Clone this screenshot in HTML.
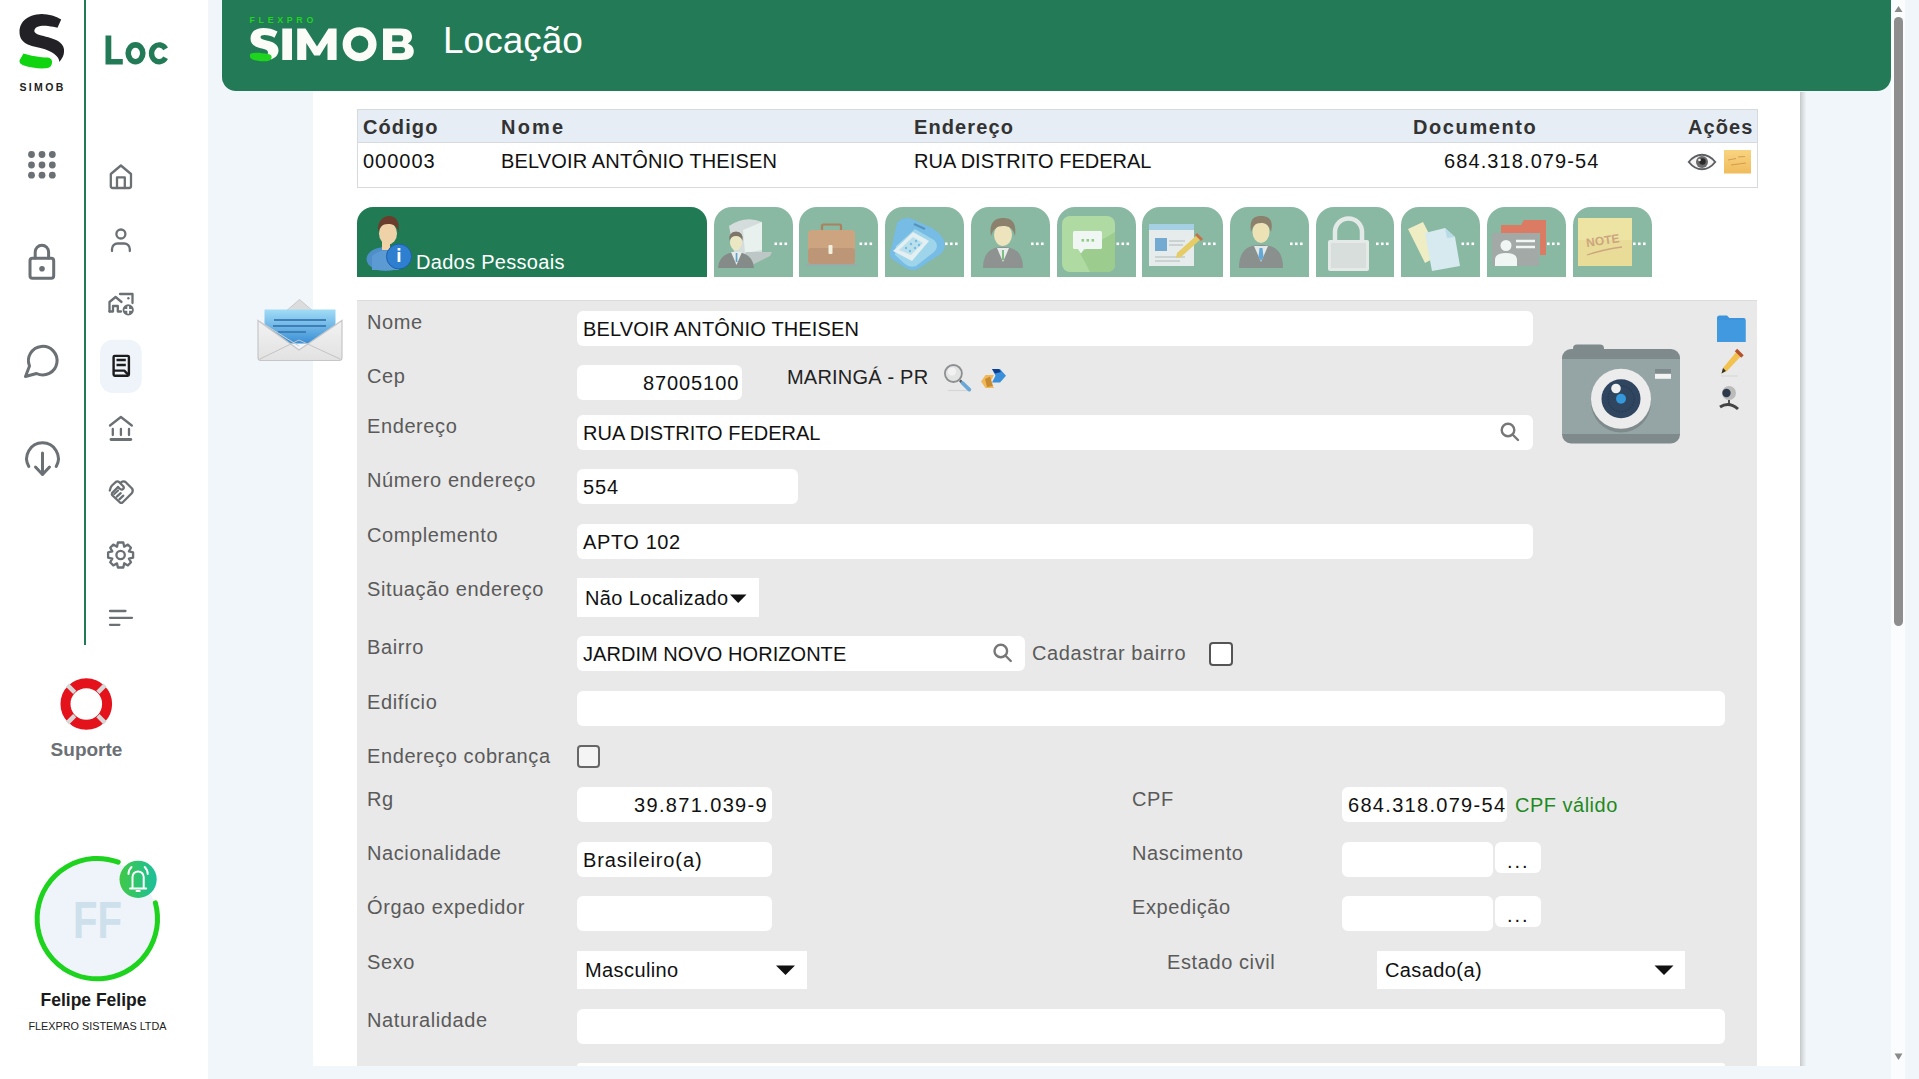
<!DOCTYPE html>
<html><head><meta charset="utf-8">
<style>
*{box-sizing:border-box;margin:0;padding:0}
html,body{width:1919px;height:1079px;overflow:hidden;background:#f1f6fb;font-family:"Liberation Sans",sans-serif}
.a{position:absolute}
#sb1{left:0;top:0;width:84px;height:1079px;background:#fff}
#sb2{left:84px;top:0;width:124px;height:1079px;background:#fff}
#gline{left:84px;top:0;width:2px;height:645px;background:#237a56}
#hdr{left:222px;top:0;width:1669px;height:91px;background:#237a56;border-radius:0 0 14px 14px}
#panel{left:313px;top:91px;width:1487px;height:975px;background:#fff}
#pshadow{left:1800px;top:92px;width:6px;height:974px;background:linear-gradient(90deg,#c4c9cc,#dfe3e6 60%,#eef2f5)}
#sbar{left:1891px;top:0;width:14px;height:1079px;background:#fbfcfd}
#thumb{left:1894px;top:17px;width:9px;height:609px;background:#8e8e8e;border-radius:5px}
.lbl{color:#5a5a5a;font-size:20px;letter-spacing:0.6px;white-space:nowrap}
.inp{background:#fff;border-radius:6px}
.txt{color:#111;font-size:20px;white-space:nowrap}
.th{font-weight:bold;font-size:20px;color:#333;letter-spacing:1.1px;white-space:nowrap}
.td{font-size:20px;color:#111;white-space:nowrap}
.tab{top:207px;height:70px;width:79px;background:#89b8a3;border-radius:18px 18px 0 0}
.dots{top:242px;width:14px;height:3px;background:
 radial-gradient(circle,#fff 1.3px,transparent 1.5px) 0 0/5px 3px repeat-x}
</style></head><body>
<div id="sb1" class="a"></div>
<div id="sb2" class="a"></div>
<div id="gline" class="a"></div>
<div id="hdr" class="a"></div>
<div id="panel" class="a"></div>
<div id="pshadow" class="a"></div>
<div id="sbar" class="a"></div>
<div id="thumb" class="a"></div>
<svg class="a" style="left:1891px;top:0" width="14" height="1079" viewBox="1891 0 14 1079"><path d="M1894.5 12 L1898.5 6 L1902.5 12 Z" fill="#8a8a8a"/><path d="M1894.5 1053.5 L1898.5 1060 L1902.5 1053.5 Z" fill="#8a8a8a"/></svg>

<!-- sidebar svg -->
<svg class="a" style="left:0;top:0" width="208" height="1079" viewBox="0 0 208 1079">
 <!-- S logo -->
 <path fill="#222226" d="M61.2 19.5 C56 16 49 14 41.7 13.9 C35 14 28 16 23.2 21.3 C20 25 19.5 29.7 19.5 31 C19.5 37 21 41 27.8 44.5 C33 47 39 47.3 45 49.2 C50 51 54 53 56.5 56 C58.5 58 59.3 60 59.3 62 C62 59 64 55 64 52 C64.5 48 63 45 60 42.5 C56 39 50 38 43.6 36 C39 35 36 34 35 32.5 C33.5 30.5 35 28 37 27 C40 25.5 45 25.5 48 26 C52 26.5 55 27 57.5 27.8 Z"/>
 <path fill="#0fd40f" d="M23.5 53.5 C30 55.5 40 57.5 48 57.5 C51 58 52.5 60 52 63 C51.5 66 50 68 46 68.3 C38 68.8 30 67.5 24 65.5 C20 64 19 62 19.7 60 Z"/>
 <text x="42.6" y="91" text-anchor="middle" font-family="Liberation Sans" font-weight="bold" font-size="10.5" letter-spacing="2.4" fill="#222">SIMOB</text>
 <!-- grid -->
 <g fill="#6b7075">
  <circle cx="31.5" cy="154.5" r="3.4"/><circle cx="42" cy="154.5" r="3.4"/><circle cx="52.3" cy="154.5" r="3.4"/>
  <circle cx="31.5" cy="165" r="3.4"/><circle cx="42" cy="165" r="3.4"/><circle cx="52.3" cy="165" r="3.4"/>
  <circle cx="31.5" cy="175.2" r="3.4"/><circle cx="42" cy="175.2" r="3.4"/><circle cx="52.3" cy="175.2" r="3.4"/>
 </g>
 <g fill="none" stroke="#6b7075" stroke-width="3" stroke-linecap="round" stroke-linejoin="round">
  <!-- lock -->
  <rect x="30" y="258.3" width="23.7" height="20" rx="2.5"/>
  <path d="M35.2 258 V252 A6.7 6.7 0 0 1 48.6 252 V258"/>
 </g><circle cx="42" cy="268.7" r="2.8" fill="#6b7075"/><g fill="none" stroke="#6b7075" stroke-width="3" stroke-linecap="round" stroke-linejoin="round">
  <!-- chat -->
  <path d="M29.5 366 A14.3 14.3 0 1 1 36.5 373.5 L25.5 376.5 Z"/>
  <!-- download -->
  <path d="M28.8 466.5 A15.8 15.8 0 1 1 56.2 466.5"/>
  <path d="M42.5 453 V474.5 M35.5 467 L42.5 474.5 L49.5 467"/>
 </g>
 <g fill="none" stroke="#6b7075" stroke-width="2.3" stroke-linecap="round" stroke-linejoin="round">
  <!-- home -->
  <path d="M110.8 174 L120.9 165.5 L131 174 V186 A2 2 0 0 1 129 188 H112.8 A2 2 0 0 1 110.8 186 Z"/>
  <path d="M117 188 V177.3 H124.8 V188"/>
  <!-- user -->
  <circle cx="120.9" cy="234" r="4.5"/>
  <path d="M112 251 V249 A5.5 5.5 0 0 1 117.5 243.5 H124.3 A5.5 5.5 0 0 1 129.8 249 V251"/>
  <!-- house add -->
  <path d="M109.5 311.5 V302 L115.6 297 L121.5 302" />
  <path d="M109.5 311.5 H113 V306 H117.8 V311.5 H121"/>
  <path d="M120 294 H132.5 V303"/>
  <!-- bank -->
  <path d="M110 425.5 L120.9 417 L131.8 425.5"/>
  <path d="M112.8 429 V435 M120.9 429 V435 M129 429 V435"/>
  <path d="M111 439.5 H130.8" stroke-width="2.8"/>
  <!-- gear -->
  <circle cx="120.6" cy="555" r="4.2"/>
  <!-- menu -->
  <path d="M110 611 H125.5 M110 617.8 H132 M110 624.8 H119.4"/>
 </g>
 <circle cx="128.4" cy="298.2" r="1.2" fill="#6b7075"/>
 <circle cx="128.2" cy="309.9" r="5.6" fill="#6b7075"/>
 <path d="M128.2 306.9 V312.9 M125.2 309.9 H131.2" stroke="#fff" stroke-width="1.8" stroke-linecap="round"/>
 <!-- gear teeth -->
 <path fill="none" stroke="#6b7075" stroke-width="2.3" stroke-linejoin="round" d="M117.9 542.5 L123.3 542.5 L124.2 546.7 L127.9 544.6 L131 547.7 L128.9 551.4 L133.1 552.3 L133.1 557.7 L128.9 558.6 L131 562.3 L127.9 565.4 L124.2 563.3 L123.3 567.5 L117.9 567.5 L117 563.3 L113.3 565.4 L110.2 562.3 L112.3 558.6 L108.1 557.7 L108.1 552.3 L112.3 551.4 L110.2 547.7 L113.3 544.6 L117 546.7 Z"/>
 <!-- handshake -->
 <g fill="none" stroke="#6b7075" stroke-width="2.3" stroke-linejoin="round" stroke-linecap="round">
  <path d="M109.8 490.5 L110.7 487.5 Q111.5 486 112.5 485 L116 481.8 Q117.5 480.8 119 482 L123.5 486.5 Q124.5 488.5 122.5 489.5 Q121 490 119.5 488.5 L118 487"/>
  <path d="M118 487 L112 493 Q111.5 494.5 112.5 495.5 L120 502.5 Q121.3 503.3 122.5 502.5 L132 493 Q133.5 490.5 132 488.5 L125.5 482 Q123.5 480.5 121 482.5"/>
  <path d="M114.2 494 L118 490.5 M116.8 496.7 L120.7 493.2 M119.4 499.3 L123.3 495.7"/>
 </g>
 <!-- active doc -->
 <rect x="100" y="339.7" width="41.7" height="53.3" rx="13" fill="#eef4fa"/>
 <g fill="none" stroke="#1c1c1c" stroke-width="2.4" stroke-linejoin="round">
  <rect x="113.6" y="355.9" width="15.3" height="19.9" rx="1.2"/>
  <path d="M116.5 360 H125.8 M116.5 365 H125.8 M114 370.6 H124.3 L128.4 374.8"/>
 </g>
 <!-- lifebuoy -->
 <circle cx="86.3" cy="704" r="20.8" fill="none" stroke="#e3121b" stroke-width="10"/>
 <g stroke="#d7d7d7" stroke-width="4.5">
  <path d="M67.5 685.2 L74.7 692.4 M105.1 685.2 L97.9 692.4 M67.5 722.8 L74.7 715.6 M105.1 722.8 L97.9 715.6"/>
 </g>
 <text x="86.5" y="755.5" text-anchor="middle" font-family="Liberation Sans" font-weight="bold" font-size="19" fill="#6b7075">Suporte</text>
 <!-- avatar -->
 <circle cx="97.3" cy="918.6" r="59" fill="#eef4f9"/>
 <text x="73" y="937.5" font-family="Liberation Sans" font-weight="bold" font-size="51" fill="#cde0ec" textLength="49" lengthAdjust="spacingAndGlyphs">FF</text>
 <path d="M118.2 862.2 A60.2 60.2 0 1 0 155.4 902.8" fill="none" stroke="#1ed31e" stroke-width="5" stroke-linecap="round"/>
 <defs><linearGradient id="bg1" x1="0" x2="1" y1="0" y2="0"><stop offset="0" stop-color="#40c946"/><stop offset="1" stop-color="#1cbf9c"/></linearGradient></defs>
 <circle cx="138.1" cy="879.3" r="18.6" fill="url(#bg1)"/>
 <g fill="none" stroke="#fff" stroke-width="2" stroke-linecap="round">
  <path d="M132.5 888 V877 A5.6 5.6 0 0 1 143.7 877 V888 M130 888.5 H146.2 M136.5 891 H139.7"/>
  <path d="M128.5 874 A10 10 0 0 1 131.5 867 M147.7 874 A10 10 0 0 0 144.7 867"/>
 </g>
 <text x="93.5" y="1005.5" text-anchor="middle" font-family="Liberation Sans" font-weight="bold" font-size="17.5" fill="#1a1a1a">Felipe Felipe</text>
 <text x="97.5" y="1029.5" text-anchor="middle" font-family="Liberation Sans" font-size="11" fill="#222" textLength="138" lengthAdjust="spacingAndGlyphs">FLEXPRO SISTEMAS LTDA</text>
</svg>

<!-- header content -->
<div class="a" style="left:443px;top:17px;font-size:37px;color:#fff;white-space:nowrap;line-height:48px">Locação</div>
<svg class="a" style="left:95px;top:25px" width="85" height="50" viewBox="95 25 85 50">
 <path d="M105.5 35.5 H111.3 V59 H122.8 V64.4 H105.5 Z" fill="#237a56"/>
 <ellipse cx="135.5" cy="53.3" rx="7.3" ry="8.4" fill="none" stroke="#237a56" stroke-width="5.6"/>
 <path d="M165.6 48.9 A7.6 8.4 0 1 0 165.6 57.7" fill="none" stroke="#237a56" stroke-width="5.4"/>
</svg>

<!-- header logo -->
<svg class="a" style="left:240px;top:0" width="190" height="80" viewBox="240 0 190 80">
 <text x="249.5" y="22.8" font-family="Liberation Sans" font-weight="bold" font-size="8.8" letter-spacing="3.7" fill="#22d422">FLEXPRO</text>
 <g fill="#fbfbf8">
  <!-- S -->
  <path d="M277.5 31.5 C273 29 268 28 263.5 28 C255 28 250.5 32.5 250.5 38.5 C250.5 44.5 255 47 262 48.5 C266 49.5 268 50.3 268 52.5 C268 54 267 55 266.5 55.5 L271 59.5 C275 58 278.5 55 278.5 50.5 C278.5 44 273 42 266.5 40.5 C262.5 39.5 260.5 39 260.5 37.3 C260.5 35.8 262 35 264.5 35 C268 35 271.5 36 274.5 37.8 Z"/>
  <rect x="282.3" y="28.5" width="9.7" height="31.5"/>
  <path d="M297.2 60 V28.5 H305.5 L317 46.5 L328.5 28.5 H336.6 V60 H327.5 V43 L319.8 55.5 H314.2 L306.3 43 V60 Z"/>
  <path fill-rule="evenodd" d="M359.6 27.3 A17 17 0 1 1 359.6 61.3 A17 17 0 1 1 359.6 27.3 Z M359.6 35.5 A8.7 8.7 0 1 0 359.6 52.9 A8.7 8.7 0 1 0 359.6 35.5 Z"/>
  <path fill-rule="evenodd" d="M383 28.5 H401 C408.5 28.5 412 32 412 36.8 C412 40 410.3 42.2 407.8 43.5 C411.3 44.7 413.8 47.3 413.8 51.3 C413.8 57 409.5 60 401.5 60 H383 Z M392.2 35.3 V41.5 H400 C402.3 41.5 403.2 40.5 403.2 38.4 C403.2 36.3 402.3 35.3 400 35.3 Z M392.2 47 V53.3 H401.5 C404 53.3 405 52.3 405 50.1 C405 48 404 47 401.5 47 Z"/>
 </g>
 <path fill="#1ed41e" d="M251 53.5 C255 52 262 53 268 54 C271 54.5 272 56 271.5 58 C271 60.5 268 61.5 263 61.3 C257 61 252 60 250.5 58 C249.5 56.5 249.5 54.5 251 53.5 Z"/>
</svg>

<!-- table -->
<div class="a" style="left:357px;top:109px;width:1401px;height:79px;border:1px solid #d6dade;background:#fff"></div>
<div class="a" style="left:358px;top:110px;width:1399px;height:33px;background:#e6edf5;border-bottom:1px solid #d6dade"></div>

<div class="a th" style="left:363px;top:116px">Código</div>
<div class="a th" style="left:501px;top:116px;letter-spacing:2.2px">Nome</div>
<div class="a th" style="left:914px;top:116px">Endereço</div>
<div class="a th" style="left:1413px;top:116px;letter-spacing:1.6px">Documento</div>
<div class="a th" style="left:1688px;top:116px">Ações</div>
<div class="a td" style="left:363px;top:150px;letter-spacing:1px">000003</div>
<div class="a td" style="left:501px;top:150px;letter-spacing:0.15px">BELVOIR ANTÔNIO THEISEN</div>
<div class="a td" style="left:914px;top:150px">RUA DISTRITO FEDERAL</div>
<div class="a td" style="left:1444px;top:150px;letter-spacing:1.1px">684.318.079-54</div>
<!-- eye -->
<svg class="a" style="left:1680px;top:145px" width="80" height="35" viewBox="1680 145 80 35">
 <path d="M1688.8 162 C1694 155.5 1699 154.8 1702 154.8 C1705 154.8 1710 155.5 1715.2 162 C1710 168.5 1705 169.3 1702 169.3 C1699 169.3 1694 168.5 1688.8 162 Z" fill="#f6f6f6" stroke="#5c6064" stroke-width="2"/>
 <circle cx="1702" cy="162" r="6" fill="#6a6a6a"/>
 <circle cx="1702.5" cy="161.5" r="3.2" fill="#2a2a2a"/>
 <circle cx="1699.5" cy="160" r="1.3" fill="#eee"/>
 <defs><linearGradient id="ng" x1="0" y1="0" x2="0" y2="1"><stop offset="0" stop-color="#f8d480"/><stop offset="1" stop-color="#f0bc5c"/></linearGradient></defs>
 <rect x="1724" y="150" width="27" height="23.5" fill="url(#ng)"/>
 <path d="M1728 160 L1736 158.5 M1738 157 L1745 156.5 M1731 165 L1746 163" stroke="#c98a4a" stroke-width="0.9" opacity="0.8"/>
</svg>

<!-- tabs -->
<div class="a" style="left:357px;top:207px;width:350px;height:70px;background:#207b55;border-radius:16px 16px 0 0"></div>
<div class="a" style="left:416px;top:251px;font-size:20px;color:#fff;letter-spacing:0.3px;white-space:nowrap">Dados Pessoais</div>
<div class="a tab" style="left:714px"></div>
<div class="a tab" style="left:799px"></div>
<div class="a tab" style="left:885px"></div>
<div class="a tab" style="left:971px"></div>
<div class="a tab" style="left:1057px"></div>
<div class="a tab" style="left:1142px;width:81px"></div>
<div class="a tab" style="left:1230px"></div>
<div class="a tab" style="left:1316px;width:78px"></div>
<div class="a tab" style="left:1401px"></div>
<div class="a tab" style="left:1487px"></div>
<div class="a tab" style="left:1573px"></div>

<svg class="a" style="left:357px;top:205px" width="1300" height="75" viewBox="357 205 1300 75">
 <!-- dots -->
 <g fill="#fff">
  <rect x="774.5" y="242.5" width="2.6" height="2.6"/>
  <rect x="779.5" y="242.5" width="2.6" height="2.6"/>
  <rect x="784.5" y="242.5" width="2.6" height="2.6"/>
  <rect x="859.5" y="242.5" width="2.6" height="2.6"/>
  <rect x="864.5" y="242.5" width="2.6" height="2.6"/>
  <rect x="869.5" y="242.5" width="2.6" height="2.6"/>
  <rect x="945" y="242.5" width="2.6" height="2.6"/>
  <rect x="950" y="242.5" width="2.6" height="2.6"/>
  <rect x="955" y="242.5" width="2.6" height="2.6"/>
  <rect x="1031" y="242.5" width="2.6" height="2.6"/>
  <rect x="1036" y="242.5" width="2.6" height="2.6"/>
  <rect x="1041" y="242.5" width="2.6" height="2.6"/>
  <rect x="1116.5" y="242.5" width="2.6" height="2.6"/>
  <rect x="1121.5" y="242.5" width="2.6" height="2.6"/>
  <rect x="1126.5" y="242.5" width="2.6" height="2.6"/>
  <rect x="1203" y="242.5" width="2.6" height="2.6"/>
  <rect x="1208" y="242.5" width="2.6" height="2.6"/>
  <rect x="1213" y="242.5" width="2.6" height="2.6"/>
  <rect x="1290" y="242.5" width="2.6" height="2.6"/>
  <rect x="1295" y="242.5" width="2.6" height="2.6"/>
  <rect x="1300" y="242.5" width="2.6" height="2.6"/>
  <rect x="1376" y="242.5" width="2.6" height="2.6"/>
  <rect x="1381" y="242.5" width="2.6" height="2.6"/>
  <rect x="1386" y="242.5" width="2.6" height="2.6"/>
  <rect x="1461.5" y="242.5" width="2.6" height="2.6"/>
  <rect x="1466.5" y="242.5" width="2.6" height="2.6"/>
  <rect x="1471.5" y="242.5" width="2.6" height="2.6"/>
  <rect x="1547" y="242.5" width="2.6" height="2.6"/>
  <rect x="1552" y="242.5" width="2.6" height="2.6"/>
  <rect x="1557" y="242.5" width="2.6" height="2.6"/>
  <rect x="1633" y="242.5" width="2.6" height="2.6"/>
  <rect x="1638" y="242.5" width="2.6" height="2.6"/>
  <rect x="1643" y="242.5" width="2.6" height="2.6"/>
 </g>

 <!-- active person icon -->
 <ellipse cx="385.5" cy="259" rx="19" ry="12" fill="#4f8fc9"/>
 <path d="M372 256 Q385 245 399 256 L399 270 H372 Z" fill="#5b9ad2"/>
 <rect x="382" y="242" width="8" height="8" fill="#f1d3a6"/>
 <ellipse cx="388" cy="233.5" rx="9" ry="11" fill="#f0d2a8"/>
 <path d="M378 232 C377 220 384 216 389 216 C396 216 400 221 398.5 232 C397 226 394 224 388 224 C382 224 380 227 378 232 Z" fill="#6b3d2c"/>
 <circle cx="399" cy="256.5" r="12.5" fill="#2f7fd0"/>
 <circle cx="399" cy="256.5" r="12.5" fill="none" stroke="#1e5ea8" stroke-width="1"/>
 <rect x="397.6" y="252" width="2.8" height="10" fill="#fff"/>
 <rect x="397.6" y="248" width="2.8" height="2.6" fill="#fff"/>

 <g opacity="0.88">
 <!-- tab2 building person -->
 <path d="M729 226 Q745 215 762 222 L762 252 L735 257 Z" fill="#dfe3e3"/>
 <path d="M743 230 L762 222 L762 250 L745 253 Z" fill="#f7f9f9"/>
 <path d="M746 252 L772 252 L770 256 L748 267 L740 262 Z" fill="#c5caca"/>
 <path d="M718 268 Q719 253 736 252 Q753 253 754 268 Z" fill="#858585"/>
 <path d="M731 252 L736.5 265 L742 252 Z" fill="#f4f4f4"/>
 <rect x="735.7" y="253" width="1.7" height="9" fill="#5aa0d0"/>
 <ellipse cx="736" cy="242.5" rx="6" ry="7.8" fill="#f8eec8"/>
 <path d="M729.5 241 Q728 232 736 231.5 Q744 232 742.5 241 Q741 236 736 236 Q731 236 729.5 241 Z" fill="#7d6b60"/>
 <!-- tab3 briefcase -->
 <rect x="822" y="224.5" width="19" height="7" rx="1.5" fill="none" stroke="#b07a55" stroke-width="2.2"/>
 <rect x="808" y="230" width="47" height="34" rx="4" fill="#d6a37c"/>
 <rect x="808" y="248" width="47" height="16" rx="3" fill="#c49272"/>
 <rect x="828.5" y="245" width="4" height="9" rx="1" fill="#fff8e8"/>
 <rect x="806" y="264" width="51" height="2" fill="#9aa"/>

 <!-- tab4 phone -->
 <path d="M897 223 Q903 216 912 219 L932 228 Q945 236 945 246 Q944 253 936 257 L918 269 Q911 272 904 267 L892 259 Q888 255 891 249 Z" fill="#74bdee"/>
 <path d="M896 246 L915 229 L934 240 Q940 246 934 252 L916 266 Q910 268 905 264 L895 255 Z" fill="#a2daf6"/>
 <path d="M893 251 L913 232 L929 241 L912 261 Z" fill="#f0f7fb"/>
 <path d="M899 250 L913 237 L923 243 L911 255 Z" fill="#c3e5f6"/>
 <g fill="#6cc0ee"><circle cx="906" cy="248" r="1.2"/><circle cx="911" cy="244" r="1.2"/><circle cx="916" cy="241" r="1.2"/><circle cx="910" cy="251" r="1.2"/><circle cx="915" cy="248" r="1.2"/><circle cx="919" cy="245" r="1.2"/></g>
 <path d="M914 224 L925 229" stroke="#4f8fc0" stroke-width="2"/>
 <!-- tab5 person suit -->
 <path d="M983 268 C983 252 992 247 1003 247 C1014 247 1023 252 1023 268 Z" fill="#8f8f8f"/>
 <path d="M997 248 L1003 262 L1009 248 Z" fill="#f4f4f4"/>
 <rect x="1002" y="250" width="2" height="10" fill="#7cbf7c"/>
 <ellipse cx="1003" cy="235" rx="9" ry="11" fill="#fbe9c0"/>
 <path d="M991 236 C989 221 996 218 1003 218 C1011 218 1017 222 1015 236 C1013 228 1009 226 1003 226 C997 226 993 229 991 236 Z" fill="#8d7a65"/>

 <!-- tab6 chat -->
 <rect x="1062" y="216" width="53" height="56" rx="8" fill="#b5e0a4"/>
 <path d="M1080 253 L1115 232 L1115 264 Q1115 272 1107 272 L1090 272 Z" fill="#9fd08c"/>
 <rect x="1073" y="231" width="29" height="18" rx="1.5" fill="#fff"/>
 <path d="M1078 249 L1081 253.5 L1084 249 Z" fill="#fff"/>
 <g fill="#8fcf80"><rect x="1081.5" y="239" width="2.6" height="2.6"/><rect x="1086.5" y="239" width="2.6" height="2.6"/><rect x="1091.5" y="239" width="2.6" height="2.6"/></g>

 <!-- tab7 id card -->
 <rect x="1149" y="224" width="45" height="42" fill="#f2f4f5"/>
 <rect x="1149" y="224" width="45" height="6" fill="#a9d4ee"/>
 <rect x="1155" y="238" width="12" height="13" fill="#6fa9d8"/>
 <path d="M1169 241 H1185 M1169 245 H1183 M1155 257 H1185 M1155 261 H1180" stroke="#c9cdd0" stroke-width="1.4"/>
 <path d="M1197 235 L1201 239 L1181 257 L1176 258 L1177 253 Z" fill="#f3cf5e"/>
 <path d="M1196 234 L1202 240" stroke="#c96a40" stroke-width="3"/>

 <!-- tab8 person tie -->
 <path d="M1239 268 C1239 250 1248 245 1261 245 C1274 245 1283 250 1283 268 Z" fill="#8b8b8b"/>
 <path d="M1254 246 L1261 262 L1268 246 Z" fill="#f0f0f0"/>
 <path d="M1259.5 248 L1262.5 248 L1263.5 257 L1261 261 L1258.5 257 Z" fill="#5ea8e0"/>
 <ellipse cx="1261" cy="232" rx="8.5" ry="11" fill="#fbe8b8"/>
 <path d="M1251 232 C1249 218 1255 216 1261 216 C1268 216 1274 219 1271 232 C1269 225 1266 223 1261 223 C1255 223 1253 226 1251 232 Z" fill="#8d7a65"/>

 <!-- tab9 padlock -->
 <path d="M1335 241 V232 A13.5 13.5 0 0 1 1362 232 V241" fill="none" stroke="#f0f0f0" stroke-width="4.5"/>
 <rect x="1328" y="240" width="41" height="31" rx="2" fill="#f2f2f2"/>
 <rect x="1331" y="243" width="35" height="25" fill="#e4e4e4"/>

 <!-- tab10 papers -->
 <path d="M1408 229 L1423 222 L1440 255 L1425 263 Z" fill="#fdf5c8"/>
 <path d="M1425 233 L1445 228 L1455 237 L1460 266 L1432 271 Z" fill="#e2f2fb"/>
 <path d="M1445 228 L1447 238 L1455 237" fill="#bfe0f2"/>

 <!-- tab11 card folder -->
 <path d="M1501 225 H1521 L1524 220 H1546 V255 H1540 V233 H1501 Z" fill="#e8735c"/>
 <rect x="1492" y="233" width="47" height="33" rx="2" fill="#a7a7a7"/>
 <circle cx="1506" cy="245.5" r="5.5" fill="#fff"/>
 <path d="M1495 266 V260 Q1495 253 1506 253 Q1517 253 1517 260 V266 Z" fill="#fff"/>
 <path d="M1516 241 H1535 M1516 247 H1535" stroke="#fff" stroke-width="2.4"/>

 <!-- tab12 note -->
 <rect x="1578" y="218" width="54" height="48" fill="#fbe9a4"/>
 <path d="M1578 240 H1632 V266 H1578 Z" fill="#f5dc90" opacity="0.6"/>
 <text x="1586" y="245" font-family="Liberation Sans" font-weight="bold" font-size="12" fill="#d7a47a" transform="rotate(-8 1600 240)">NOTE</text>
 <path d="M1587 255 Q1605 249 1622 247" fill="none" stroke="#d7a47a" stroke-width="1.3"/>
 </g>
</svg>

<!-- form bg -->
<div class="a" style="left:357px;top:300px;width:1400px;height:766px;background:#e9e9e9;border-top:1px solid #dcdcdc"></div>

<!-- labels -->
<div class="a lbl" style="left:367px;top:311px">Nome</div>
<div class="a lbl" style="left:367px;top:365px">Cep</div>
<div class="a lbl" style="left:367px;top:415px">Endereço</div>
<div class="a lbl" style="left:367px;top:469px">Número endereço</div>
<div class="a lbl" style="left:367px;top:524px">Complemento</div>
<div class="a lbl" style="left:367px;top:578px">Situação endereço</div>
<div class="a lbl" style="left:367px;top:636px">Bairro</div>
<div class="a lbl" style="left:367px;top:691px">Edifício</div>
<div class="a lbl" style="left:367px;top:745px">Endereço cobrança</div>
<div class="a lbl" style="left:367px;top:788px">Rg</div>
<div class="a lbl" style="left:367px;top:842px">Nacionalidade</div>
<div class="a lbl" style="left:367px;top:896px">Órgao expedidor</div>
<div class="a lbl" style="left:367px;top:951px">Sexo</div>
<div class="a lbl" style="left:367px;top:1009px">Naturalidade</div>
<div class="a lbl" style="left:1132px;top:788px">CPF</div>
<div class="a lbl" style="left:1132px;top:842px">Nascimento</div>
<div class="a lbl" style="left:1132px;top:896px">Expedição</div>
<div class="a lbl" style="left:1167px;top:951px">Estado civil</div>
<div class="a lbl" style="left:1032px;top:642px">Cadastrar bairro</div>

<!-- inputs -->
<div class="a inp" style="left:577px;top:311px;width:956px;height:35px"></div>
<div class="a inp" style="left:577px;top:365px;width:165px;height:35px"></div>
<div class="a inp" style="left:577px;top:415px;width:956px;height:35px"></div>
<div class="a inp" style="left:577px;top:469px;width:221px;height:35px"></div>
<div class="a inp" style="left:577px;top:524px;width:956px;height:35px"></div>
<div class="a" style="left:577px;top:578px;width:182px;height:39px;background:#fff"></div>
<div class="a inp" style="left:577px;top:636px;width:448px;height:35px"></div>
<div class="a inp" style="left:577px;top:691px;width:1148px;height:35px"></div>
<div class="a" style="left:577px;top:745px;width:23px;height:23px;border:2px solid #666;border-radius:4px;background:#f4f4f4"></div>
<div class="a" style="left:1209px;top:642px;width:24px;height:24px;border:2px solid #555;border-radius:4px;background:#fff"></div>
<div class="a inp" style="left:577px;top:787px;width:195px;height:35px"></div>
<div class="a inp" style="left:577px;top:842px;width:195px;height:35px"></div>
<div class="a inp" style="left:577px;top:896px;width:195px;height:35px"></div>
<div class="a" style="left:577px;top:951px;width:230px;height:38px;background:#fff"></div>
<div class="a inp" style="left:577px;top:1009px;width:1148px;height:35px"></div>
<div class="a inp" style="left:577px;top:1063px;width:1148px;height:3px;border-radius:6px 6px 0 0"></div>
<div class="a inp" style="left:1342px;top:787px;width:165px;height:35px"></div>
<div class="a inp" style="left:1342px;top:842px;width:151px;height:35px"></div>
<div class="a inp" style="left:1495px;top:842px;width:46px;height:31px"></div>
<div class="a inp" style="left:1342px;top:896px;width:151px;height:35px"></div>
<div class="a inp" style="left:1495px;top:896px;width:46px;height:31px"></div>
<div class="a" style="left:1377px;top:951px;width:308px;height:38px;background:#fff"></div>

<!-- input texts -->
<div class="a txt" style="left:583px;top:318px;letter-spacing:0.15px">BELVOIR ANTÔNIO THEISEN</div>
<div class="a txt" style="left:643px;top:372px;letter-spacing:0.9px">87005100</div>
<div class="a txt" style="left:583px;top:422px">RUA DISTRITO FEDERAL</div>
<div class="a txt" style="left:583px;top:476px;letter-spacing:0.9px">554</div>
<div class="a txt" style="left:583px;top:531px;letter-spacing:0.6px">APTO 102</div>
<div class="a txt" style="left:585px;top:587px;letter-spacing:0.4px">Não Localizado</div>
<div class="a txt" style="left:583px;top:643px;letter-spacing:0.05px">JARDIM NOVO HORIZONTE</div>
<div class="a txt" style="left:634px;top:794px;letter-spacing:1.35px">39.871.039-9</div>
<div class="a txt" style="left:583px;top:849px;letter-spacing:0.9px">Brasileiro(a)</div>
<div class="a txt" style="left:585px;top:959px;letter-spacing:0.4px">Masculino</div>
<div class="a txt" style="left:1348px;top:794px;letter-spacing:1.3px">684.318.079-54</div>
<div class="a txt" style="left:1515px;top:794px;letter-spacing:0.5px;color:#1e8a1e">CPF válido</div>
<div class="a txt" style="left:1385px;top:959px;letter-spacing:0.4px">Casado(a)</div>
<div class="a txt" style="left:787px;top:366px;letter-spacing:0.2px;color:#222">MARINGÁ - PR</div>
<div class="a txt" style="left:1507px;top:850px;letter-spacing:2px">...</div>
<div class="a txt" style="left:1507px;top:904px;letter-spacing:2px">...</div>

<svg class="a" style="left:357px;top:300px" width="1400" height="766" viewBox="357 300 1400 766">
 <!-- select arrows -->
 <path d="M730 594.5 H746.5 L738.2 603 Z" fill="#111"/>
 <path d="M776 965.5 H795 L785.5 975 Z" fill="#111"/>
 <path d="M1654.5 965.5 H1673.5 L1664 975 Z" fill="#111"/>
 <!-- search icons -->
 <g fill="none" stroke="#777" stroke-width="2.4" stroke-linecap="round">
  <circle cx="1508" cy="430" r="6.3"/><path d="M1512.5 434.5 L1518 440"/>
  <circle cx="1000.8" cy="651" r="6.3"/><path d="M1005.3 655.5 L1010.8 661"/>
 </g>
 <!-- magnifier -->
 <path d="M948 390.5 H968" stroke="#d6d6d6" stroke-width="1.2"/>
 <circle cx="953.4" cy="373.5" r="8.5" fill="#e2e4e4" stroke="#8d8f90" stroke-width="1.8"/>
 <circle cx="952" cy="371.5" r="4" fill="#f2f2f2"/>
 <path d="M960 380.5 L962 382.5" stroke="#555" stroke-width="2.5"/>
 <path d="M962.5 383 L969.3 389.6" stroke="#6aa7d9" stroke-width="3.8" stroke-linecap="round"/>
 <!-- refresh -->
 <path d="M981 381.5 L985.5 375 H994 L990.5 381.5 L994 388 H985.5 Z" fill="#f1b85a"/>
 <path d="M985 379 L990 376.5 L993 386 L987 387 Z" fill="#c98b32"/>
 <path d="M992 369 H1000 L1006 375.7 L1000 382.4 H992 L995.5 375.7 Z" fill="#3a8fdb"/>
 <path d="M992 369 H999 L1001 372 L995 373.5 Z" fill="#0f3f8c"/>
 <!-- camera -->
 <rect x="1573" y="344.5" width="31" height="8" rx="4" fill="#7f8a8c"/>
 <rect x="1562" y="349" width="118" height="94.5" rx="9" fill="#7f8a8c"/>
 <rect x="1562" y="359" width="118" height="75" fill="#95a5a6"/>
 <rect x="1655" y="369" width="16" height="5" fill="#7f8a8c"/>
 <rect x="1655" y="373.8" width="16" height="5" fill="#f3f3f3"/>
 <circle cx="1621" cy="402.5" r="30" fill="#7f8a8c"/>
 <circle cx="1621" cy="398.8" r="30" fill="#ececec"/>
 <circle cx="1621" cy="398.8" r="19.5" fill="#2f4560"/>
 <circle cx="1621" cy="398.8" r="13" fill="none" stroke="#22344a" stroke-width="1" stroke-dasharray="1.5 1.5"/>
 <circle cx="1621" cy="398.8" r="5" fill="#3498db"/>
 <circle cx="1616" cy="388.5" r="4.8" fill="#f0f0f0"/>
 <!-- folder -->
 <path d="M1717 318 Q1717 315.5 1719.5 315.5 H1727 L1729.5 318 H1744 Q1745.5 318 1745.5 319.5 V342 H1717 Z" fill="#3c94dc"/>
 <rect x="1717" y="320" width="28.5" height="22" fill="#4199df"/>
 <!-- pencil -->
 <path d="M1737 351 L1741.5 355.5 L1727 371 L1721.5 373.5 L1723 368 Z" fill="#f2c14e"/>
 <path d="M1736 350 L1742.5 356.5" stroke="#b5502e" stroke-width="3.4"/>
 <path d="M1721.5 373.5 L1723 368 L1726 371 Z" fill="#333"/>
 <path d="M1721 376 H1738" stroke="#d9d9d9" stroke-width="1.2"/>
 <!-- webcam -->
 <circle cx="1729" cy="393" r="7" fill="#bbb"/>
 <circle cx="1726.5" cy="393" r="4.2" fill="#2d3a4a"/>
 <path d="M1729 400 V405" stroke="#555" stroke-width="2"/>
 <path d="M1720 407 Q1729 401 1738 409" stroke="#444" stroke-width="3" fill="none"/>
 <!-- envelope -->
</svg>
<svg class="a" style="left:250px;top:294px" width="100" height="72" viewBox="250 294 100 72">
 <defs>
  <linearGradient id="cardg" x1="0" y1="0" x2="0" y2="1"><stop offset="0" stop-color="#a2dcf6"/><stop offset="0.5" stop-color="#6fb6e6"/><stop offset="1" stop-color="#3a8fd6"/></linearGradient>
  <linearGradient id="envg" x1="0" y1="0" x2="0" y2="1"><stop offset="0" stop-color="#f2f2f2"/><stop offset="1" stop-color="#e2e2e2"/></linearGradient>
 </defs>
 <path d="M278 318 L299.5 299.5 L321 318 Z" fill="#dcdcdc" stroke="#c9c9c9" stroke-width="1"/>
 <rect x="264.5" y="309.5" width="71" height="34" fill="url(#cardg)"/>
 <path d="M274 320 H326 M273 326 H326 M278 332 H306" stroke="#3f7fb8" stroke-width="2"/>
 <path d="M258 320.5 L299 350 L342 320.5 V357.5 Q342 360.5 339 360.5 H261 Q258 360.5 258 357.5 Z" fill="url(#envg)" stroke="#c6c6c6" stroke-width="1.2"/>
 <path d="M260 359 L299 340 L340 359" fill="none" stroke="#c4c4c4" stroke-width="1"/>
 <path d="M258 320.5 L299 346" fill="none" stroke="#cfcfcf" stroke-width="1"/>
</svg>

</body></html>
